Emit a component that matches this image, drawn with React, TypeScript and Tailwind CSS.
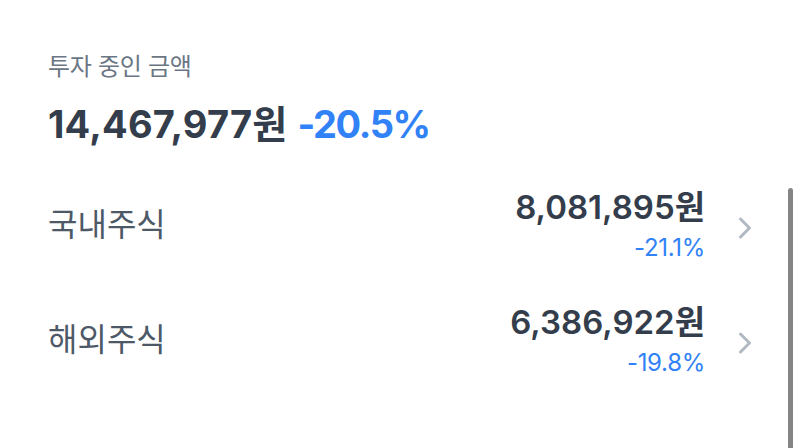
import { ChevronRight } from "lucide-react";

const font = {
  fontFamily: '"Inter", "Noto Sans CJK KR", sans-serif',
};

const rows = [
  { name: "국내주식", amount: "8,081,895원", rate: "-21.1%" },
  { name: "해외주식", amount: "6,386,922원", rate: "-19.8%" },
];

export default function App() {
  return (
    <div
      className="relative w-[800px] h-[448px] bg-white overflow-hidden"
      style={font}
    >
      <div className="pl-12 pr-[37px] pt-[50px]">
        <div className="text-[24px] leading-[34px] text-[#6b7684] tracking-[-0.3px]">
          투자 중인 금액
        </div>
        <div className="mt-[16px] flex items-baseline gap-[10px] text-[38px] leading-[48px] font-bold">
          <span className="text-[#333d4b] tracking-[0.2px]">14,467,977원</span>
          <span className="text-[#3182f6] tracking-[-1.4px]">-20.5%</span>
        </div>

        <div className="mt-[37px] flex flex-col gap-[35px]">
          {rows.map((r) => (
            <div key={r.name} className="flex items-center">
              <div className="flex-1 text-[32px] leading-[40px] text-[#4e5968]">
                {r.name}
              </div>
              <div className="flex flex-col items-end">
                <span className="text-[33px] leading-[44px] font-semibold text-[#333d4b]">
                  {r.amount}
                </span>
                <span className="mt-[2px] text-[24px] leading-[34px] text-[#3182f6] tracking-[-0.3px]">
                  {r.rate}
                </span>
              </div>
              <ChevronRight
                size={36}
                strokeWidth={2}
                className="ml-[22px] mt-[6px] text-[#b0b8c1]"
              />
            </div>
          ))}
        </div>
      </div>

      <div className="absolute right-[7px] top-[188px] bottom-0 w-[5px] rounded-t-full bg-[#858585]" />
    </div>
  );
}
